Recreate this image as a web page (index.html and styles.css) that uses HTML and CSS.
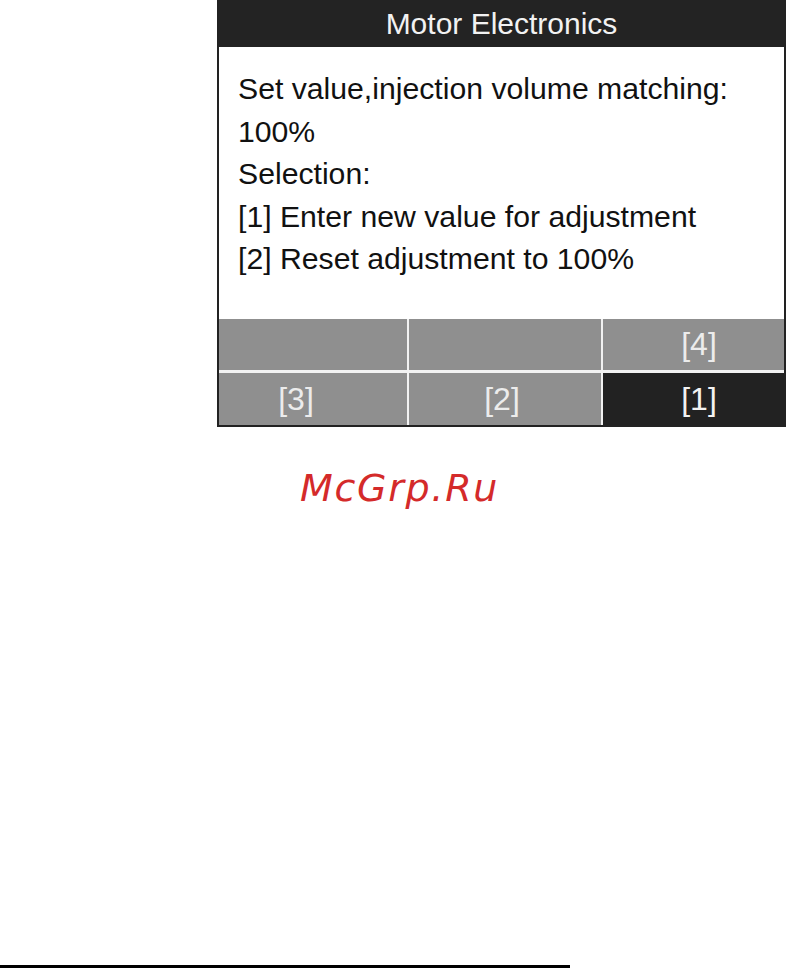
FILE: index.html
```html
<!DOCTYPE html>
<html>
<head>
<meta charset="utf-8">
<link rel="stylesheet" href="styles.css">
</head>
<body>
<div class="screen">
  <div class="title">Motor Electronics</div>
  <div class="content">
    <div class="line">Set value,injection volume matching:</div>
    <div class="line">100%</div>
    <div class="line">Selection:</div>
    <div class="line">[1] Enter new value for adjustment</div>
    <div class="line">[2] Reset adjustment to 100%</div>
  </div>
  <div class="keys">
    <div class="key"></div>
    <div class="key"></div>
    <div class="key k4">[4]</div>
    <div class="key k3">[3]</div>
    <div class="key k2">[2]</div>
    <div class="key k1 active">[1]</div>
  </div>
</div>
<div class="watermark">McGrp.Ru</div>
<div class="rule"></div>
</body>
</html>
```
FILE: styles.css
```css
html, body {
  margin: 0;
  padding: 0;
  background: #ffffff;
}
body {
  width: 787px;
  height: 968px;
  overflow: hidden;
  font-family: "Liberation Sans", Arial, sans-serif;
}
.screen {
  margin-left: 217px;
  width: 565px;
  border: 2px solid #222222;
  border-top: none;
  background: #ffffff;
}
.title {
  height: 47px;
  background: #232323;
  color: #f2f2f2;
  font-size: 30px;
  line-height: 47px;
  text-align: center;
}
.content {
  height: 272px;
  box-sizing: border-box;
  padding: 21px 0 0 19px;
  color: #111111;
  font-size: 30.2px;
  line-height: 42.5px;
}
.keys {
  display: grid;
  grid-template-columns: 188px 192px 181px;
  grid-template-rows: 51px 52px;
  column-gap: 2px;
  row-gap: 3px;
  background: #f2f2f2;
}
.key {
  background: #8f8f8f;
  color: #ececec;
  font-size: 32px;
  display: flex;
  align-items: center;
  justify-content: center;
}
.k4, .k1 { padding-left: 11px; }
.k2 { padding-right: 6px; }
.k3 { padding-right: 34px; }
.key.active {
  background: #222222;
  color: #f2f2f2;
}
.watermark {
  margin-top: 41px;
  padding-left: 300px;
  font-family: "DejaVu Sans", Verdana, sans-serif;
  font-style: italic;
  font-size: 38px;
  line-height: 40px;
  letter-spacing: 1.7px;
  color: #d42a2a;
}
.rule {
  margin-top: 457px;
  width: 570px;
  height: 3px;
  background: #000000;
}
```
